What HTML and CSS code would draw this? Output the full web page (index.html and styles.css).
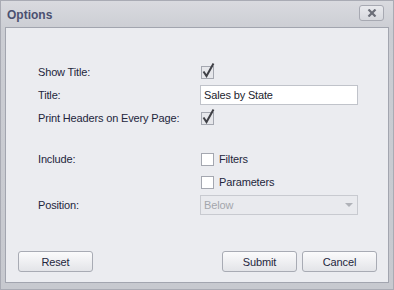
FILE: index.html
```html
<!DOCTYPE html>
<html>
<head>
    <title>Options</title>
    <link rel="stylesheet" href="styles.css">
</head>
<body>
<div class="dialog">
    <div class="title-bar">
        <span class="title">Options</span>
        <button class="close-btn" title="Close">
            <svg width="10" height="8" viewBox="0 0 10 8">
                <path d="M1.5 0.5 L8.5 7.5 M8.5 0.5 L1.5 7.5" stroke="#6b6e78" stroke-width="2.2" fill="none"/>
            </svg>
        </button>
    </div>
    <div class="panel">
        <div class="form">
            <div class="row">
                <label>Show Title:</label>
                <span class="check checked">
                    <svg class="tick" width="16" height="17" viewBox="0 0 16 17"><path d="M3.5 9.5 L6.5 14 L13.5 1.5" stroke="#3f4046" stroke-width="2" fill="none"/></svg>
                </span>
            </div>
            <div class="row">
                <label for="title">Title:</label>
                <input type="text" id="title" class="text-input" value="Sales by State">
            </div>
            <div class="row">
                <label>Print Headers on Every Page:</label>
                <span class="check checked">
                    <svg class="tick" width="16" height="17" viewBox="0 0 16 17"><path d="M3.5 9.5 L6.5 14 L13.5 1.5" stroke="#3f4046" stroke-width="2" fill="none"/></svg>
                </span>
            </div>
            <div class="row spaced">
                <label>Include:</label>
                <span class="check"></span>
                <span class="check-text">Filters</span>
            </div>
            <div class="row">
                <label></label>
                <span class="check"></span>
                <span class="check-text">Parameters</span>
            </div>
            <div class="row row-combo">
                <label>Position:</label>
                <div class="combo">
                    <span>Below</span>
                    <svg width="8" height="4" viewBox="0 0 8 4"><path d="M0 0 L8 0 L4 4 Z" fill="#b0b2b8"/></svg>
                </div>
            </div>
        </div>
        <div class="footer">
            <button class="btn">Reset</button>
            <div class="footer-right">
                <button class="btn">Submit</button>
                <button class="btn">Cancel</button>
            </div>
        </div>
    </div>
</div>
</body>
</html>
```

FILE: styles.css
```css
body {
    margin: 0;
    padding: 0;
    font-family: "Liberation Sans", Arial, sans-serif;
    font-size: 11px;
    letter-spacing: -0.15px;
    color: #23263c;
}

.dialog {
    width: 394px;
    height: 290px;
    box-sizing: border-box;
    padding: 0 4px 6px 4px;
    background: linear-gradient(#d9dadf, #cbcdd3 30px, #c7c9cf);
    border: 1px solid #a9abb4;
    display: flex;
    flex-direction: column;
}

.title-bar {
    height: 26px;
    display: flex;
    align-items: center;
    justify-content: space-between;
}

.title {
    font-weight: bold;
    font-size: 12px;
    letter-spacing: 0;
    color: #4b5070;
    margin-left: 2px;
    margin-top: 1px;
}

.close-btn {
    align-self: flex-start;
    width: 25px;
    height: 16px;
    margin-right: 5px;
    margin-top: 4px;
    padding: 0;
    border: 1px solid #a7a9b2;
    border-radius: 3px;
    background: linear-gradient(#e9eaee, #d6d8dd);
    display: flex;
    align-items: center;
    justify-content: center;
}

.panel {
    flex: 1;
    background-color: #ebecf0;
    border: 1px solid #a2a5af;
    padding: 34px 11px 0 12px;
    display: flex;
    flex-direction: column;
}

.form {
    padding-left: 20px;
}

.row {
    display: flex;
    align-items: center;
    height: 20px;
    margin-bottom: 3px;
}

.row.spaced {
    margin-top: 21px;
}

.row-combo {
    margin-top: 1px;
}

.row label {
    width: 162px;
    flex: none;
}

.check {
    position: relative;
    width: 11px;
    height: 11px;
    margin-left: 1px;
    border: 1px solid #a4a7b0;
    background-color: #fff;
    flex: none;
}

.check.checked {
    background-color: #e6e7eb;
}

.tick {
    position: absolute;
    left: -2px;
    top: -5px;
}

.check-text {
    margin-left: 5px;
}

.text-input {
    width: 158px;
    height: 20px;
    box-sizing: border-box;
    border: 1px solid #c0c3ca;
    background: #fff;
    padding: 0 3px;
    font-family: inherit;
    font-size: 11px;
    letter-spacing: -0.15px;
    color: #1b1d2e;
    outline: none;
}

.combo {
    width: 158px;
    height: 20px;
    box-sizing: border-box;
    border: 1px solid #c8cad0;
    background-color: #e9eaee;
    padding: 0 4px 0 3px;
    display: flex;
    align-items: center;
    justify-content: space-between;
    color: #a4a6ac;
}

.footer {
    margin-top: 33px;
    display: flex;
    justify-content: space-between;
}

.footer-right {
    display: flex;
    gap: 5px;
}

.btn {
    width: 75px;
    height: 21px;
    border: 1px solid #a8abb4;
    border-radius: 3px;
    background: linear-gradient(#fbfbfc, #e3e4e8);
    font-family: inherit;
    font-size: 11px;
    letter-spacing: -0.15px;
    color: #23263c;
    padding: 0;
}
```
